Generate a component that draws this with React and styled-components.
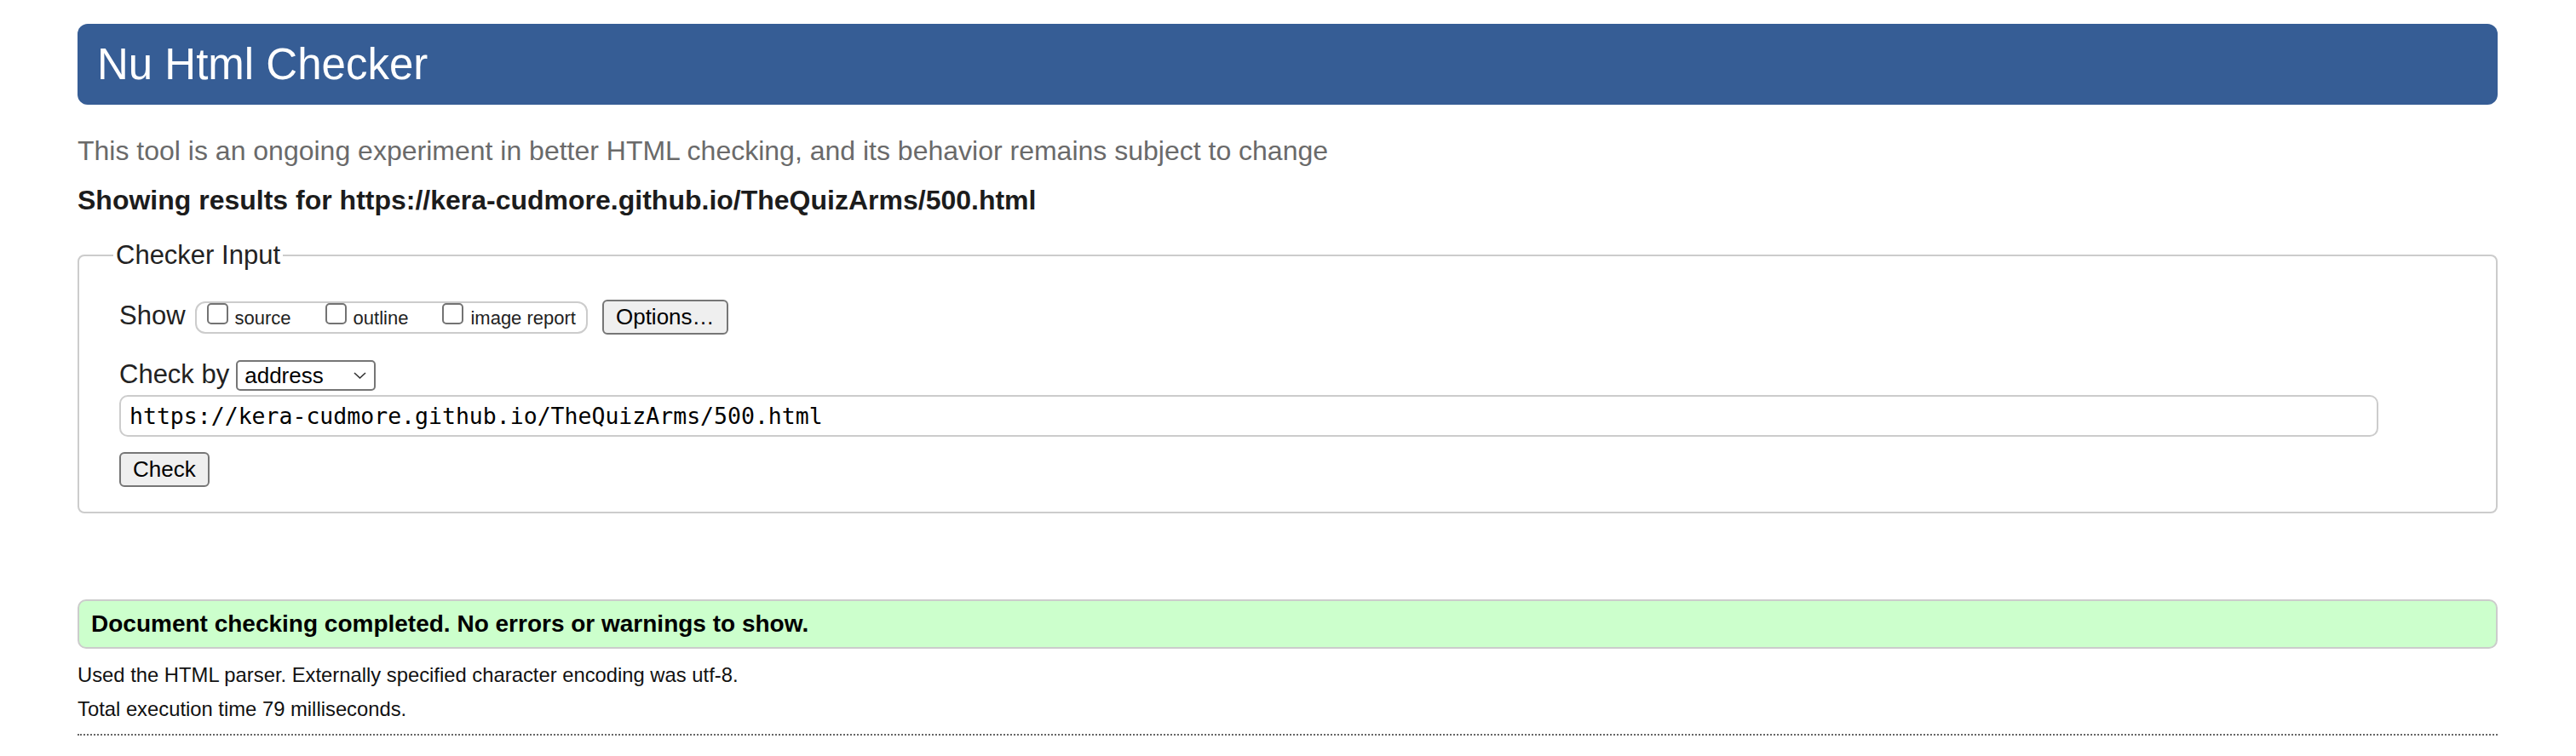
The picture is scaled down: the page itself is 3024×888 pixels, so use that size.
import styled, { createGlobalStyle } from "styled-components";

const GlobalStyle = createGlobalStyle`
  html, body {
    margin: 0;
    background: #fff;
  }
  body {
    font-family: "Liberation Sans", Arial, Helvetica, sans-serif;
    color: #222;
  }
`;

const Page = styled.div`
  padding: 28px 92px 24px 91px;
`;

const Title = styled.h1`
  margin: 0;
  height: 95px;
  padding: 0 23px;
  border-radius: 12px;
  background: #365d95;
  color: #fff;
  font-size: 51px;
  font-weight: normal;
  line-height: 95px;
`;

const Intro = styled.p`
  margin: 37px 0 0;
  font-size: 32px;
  line-height: 34.5px;
  color: #6a6a6a;
`;

const ResultsFor = styled.h2`
  margin: 23px 0 0;
  font-size: 32px;
  line-height: 34.5px;
  font-weight: bold;
  color: #1c1c1c;
`;

const Form = styled.fieldset`
  margin: 31px 0 0;
  padding: 34px 47px 29px;
  border: 2px solid #ccc;
  border-radius: 8px;
  min-width: 0;
`;

const Legend = styled.legend`
  margin-left: -7px;
  padding: 0 3px;
  font-size: 31px;
  line-height: 34.5px;
`;

const Row = styled.div`
  display: flex;
  align-items: baseline;
  margin-top: ${(p) => p.$top || 0}px;
`;

const Label = styled.span`
  margin-right: ${(p) => p.$space}px;
  font-size: 31px;
  line-height: 34.5px;
`;

const Choices = styled.div`
  display: flex;
  align-items: flex-start;
  gap: 40px;
  height: 38px;
  box-sizing: border-box;
  padding: 0 12px;
  border: 2px solid #ccc;
  border-radius: 12px;
`;

const Choice = styled.label`
  display: flex;
  align-items: baseline;
  gap: 8px;
  font-size: 22px;
`;

const Tick = styled.input.attrs({ type: "checkbox" })`
  appearance: none;
  display: inline-block;
  margin: 0;
  width: 25px;
  height: 25px;
  box-sizing: border-box;
  border: 2px solid #737373;
  border-radius: 5px;
  background: #fff;
`;

const Button = styled.button`
  height: 41px;
  margin-left: ${(p) => p.$left || 0}px;
  padding: 0 14px;
  box-sizing: border-box;
  border: 2px solid #767676;
  border-radius: 6px;
  background: #efefef;
  color: #000;
  font-family: "Liberation Sans", Arial, sans-serif;
  font-size: 26px;
`;

const SelectWrap = styled.span`
  position: relative;
  display: inline-flex;
`;

const Select = styled.select`
  appearance: none;
  width: 164px;
  height: 36px;
  box-sizing: border-box;
  padding: 0 30px 0 8px;
  border: 2px solid #767676;
  border-radius: 5px;
  background: #fff;
  color: #000;
  font-family: "Liberation Sans", Arial, sans-serif;
  font-size: 26px;
`;

const Chevron = styled.svg`
  position: absolute;
  right: 11px;
  top: 14px;
  pointer-events: none;
`;

const Address = styled.input`
  display: block;
  width: 2652px;
  height: 49px;
  margin-top: 5px;
  box-sizing: border-box;
  padding: 0 10px;
  border: 2px solid #ccc;
  border-radius: 10px;
  color: #000;
  font-family: "DejaVu Sans Mono", "Liberation Mono", monospace;
  font-size: 26.5px;
`;

const Success = styled.p`
  margin: 101px 0 0;
  height: 58px;
  box-sizing: border-box;
  padding: 0 14px;
  border: 2px solid #ccc;
  border-radius: 10px;
  background: #ccffcc;
  color: #000;
  font-size: 28px;
  font-weight: bold;
  line-height: 54px;
`;

const Note = styled.p`
  margin: ${(p) => p.$top || 0}px 0 0;
  font-size: 23.8px;
  line-height: 40px;
  color: #111;
`;

const Rule = styled.hr`
  margin: 9px 0 0;
  height: 0;
  border: 0;
  border-top: 2px dotted #666;
`;

const url = "https://kera-cudmore.github.io/TheQuizArms/500.html";

export default function App() {
  return (
    <>
      <GlobalStyle />
      <Page>
        <Title>Nu Html Checker</Title>
        <Intro>
          This tool is an ongoing experiment in better HTML checking, and its
          behavior remains subject to change
        </Intro>
        <ResultsFor>Showing results for {url}</ResultsFor>

        <Form>
          <Legend>Checker Input</Legend>
          <Row>
            <Label $space={11}>Show</Label>
            <Choices>
              <Choice>
                <Tick />
                source
              </Choice>
              <Choice>
                <Tick />
                outline
              </Choice>
              <Choice>
                <Tick />
                image report
              </Choice>
            </Choices>
            <Button type="button" $left={17}>
              Options…
            </Button>
          </Row>
          <Row $top={30}>
            <Label $space={8}>Check by</Label>
            <SelectWrap>
              <Select defaultValue="address">
                <option value="address">address</option>
                <option value="file">file upload</option>
                <option value="text">text input</option>
              </Select>
              <Chevron width="15" height="8" viewBox="0 0 15 8">
                <path d="M1 1l6.5 6L14 1" fill="none" stroke="#333" strokeWidth="1.6" />
              </Chevron>
            </SelectWrap>
          </Row>
          <Address defaultValue={url} />
          <Row $top={18}>
            <Button type="button">Check</Button>
          </Row>
        </Form>

        <Success>Document checking completed. No errors or warnings to show.</Success>
        <Note $top={11}>
          Used the HTML parser. Externally specified character encoding was utf-8.
        </Note>
        <Note>Total execution time 79 milliseconds.</Note>
        <Rule />
      </Page>
    </>
  );
}
